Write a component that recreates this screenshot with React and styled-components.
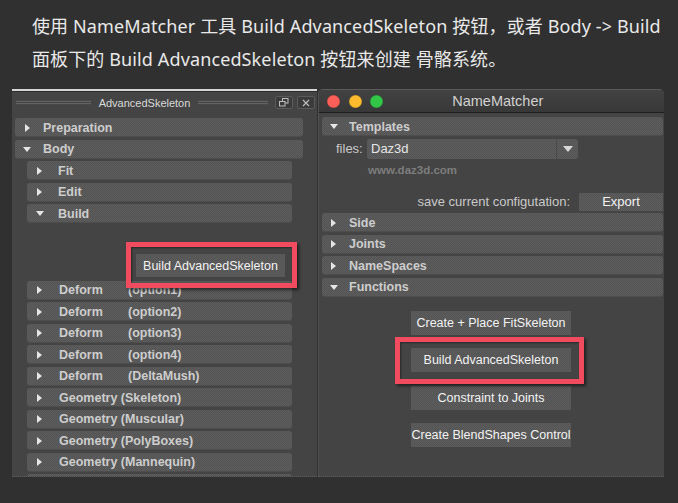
import React from "react";
import styled, { createGlobalStyle } from "styled-components";

const GlobalStyle = createGlobalStyle`
  html, body { margin: 0; padding: 0; background: #303030; }
  body {
    width: 678px;
    height: 503px;
    overflow: hidden;
    font-family: "Liberation Sans", Arial, sans-serif;
  }
`;

const checker = `repeating-conic-gradient(#5d5d5d 0 25%, #545454 0 50%) 0 0 / 2px 2px`;

const Page = styled.div`
  width: 678px;
  height: 503px;
  background: #303030;
  display: flex;
  flex-direction: column;
`;

const Intro = styled.p`
  margin: 0;
  height: 89px;
  flex: none;
  box-sizing: border-box;
  padding: 10px 0 0 32px;
  font-family: "Noto Sans", "Noto Sans CJK SC", sans-serif;
  font-size: 18px;
  line-height: 33px;
  letter-spacing: 0.12px;
  color: #e9e9e9;
  white-space: nowrap;
`;

const Workspace = styled.div`
  display: flex;
  gap: 1px;
  padding-left: 12px;
  height: 388px;
  flex: none;
`;

/* ---------- left: AdvancedSkeleton ---------- */

const LeftPanel = styled.div`
  width: 305px;
  background: #444;
  border-top: 2px solid #d6d6d6;
  overflow: hidden;
  border-bottom: 1px dotted #5e5e5e;
  box-sizing: border-box;
`;

const DockBar = styled.div`
  height: 21px;
  display: flex;
  align-items: center;
  gap: 6px;
  padding: 0 2px 0 4px;
  border-top: 1px solid #2c2c2c;
`;

const Grip = styled.div`
  width: ${(p) => p.$w}px;
  height: 5px;
  background-image: radial-gradient(circle, #727272 0.6px, transparent 0.8px);
  background-size: 2px 2.5px;
`;

const DockTitle = styled.span`
  font-size: 11px;
  color: #dadada;
  margin: 0 2px;
`;

const DockButtons = styled.div`
  display: flex;
  gap: 4px;
  margin-left: 1px;
`;

const DockButton = styled.div`
  width: 18px;
  height: 13px;
  box-sizing: border-box;
  border: 1px solid #5a5a5a;
  border-radius: 2px;
  background: #3b3b3b;
  display: flex;
  align-items: center;
  justify-content: center;
`;

const LeftList = styled.div`
  padding: 5px 14px 0 3px;
`;

const SubList = styled.div`
  padding: 0 11px 0 12px;
`;

const Bar = styled.div`
  height: 19px;
  margin-bottom: 2.5px;
  border-radius: 3px;
  background: ${checker};
  display: flex;
  align-items: center;
  padding-left: ${(p) => p.$arrowX}px;
  font-weight: bold;
  font-size: 12.5px;
  color: #cdcdcd;
  white-space: nowrap;
  box-shadow: inset 0 -1px 0 rgba(0, 0, 0, 0.12);
`;

const ArrowBox = styled.span`
  width: ${(p) => p.$w}px;
  flex: none;
  display: flex;
  align-items: center;
  &::before {
    content: "";
    display: block;
    ${(p) =>
      p.$open
        ? `border-top: 5px solid #e6e6e6; border-left: 4.5px solid transparent; border-right: 4.5px solid transparent; margin-left: -1px;`
        : `border-left: 5px solid #e6e6e6; border-top: 4px solid transparent; border-bottom: 4px solid transparent;`}
  }
`;

const Tab = styled.span`
  display: inline-block;
  width: ${(p) => p.$w}px;
`;

const Row = ({ label, note, open, arrowX = 10, textX = 28 }) => (
  <Bar $arrowX={arrowX}>
    <ArrowBox $w={textX - arrowX} $open={open} />
    {note ? <Tab $w={69}>{label}</Tab> : label}
    {note}
  </Bar>
);

const BuildArea = styled.div`
  display: flex;
  justify-content: flex-end;
  padding: 28.5px 7px 1px 0;
  margin-bottom: 2.5px;
`;

const Highlight = styled.div`
  position: relative;
  &::before {
    content: "";
    position: absolute;
    top: -${(p) => p.$t}px;
    left: -${(p) => p.$l}px;
    right: -${(p) => p.$r}px;
    bottom: -${(p) => p.$b}px;
    border: 5px solid #f04b5f;
    box-shadow: 2px 2px 3px rgba(0, 0, 0, 0.55), inset 1px 1px 2px rgba(0, 0, 0, 0.4);
    pointer-events: none;
    z-index: 2;
  }
`;

const ToolButton = styled.div`
  width: ${(p) => p.$w}px;
  height: ${(p) => p.$h}px;
  background: ${checker};
  color: #f3f3f3;
  font-size: ${(p) => p.$size || 12.5}px;
  display: flex;
  align-items: center;
  justify-content: center;
  white-space: nowrap;
`;

/* ---------- right: NameMatcher ---------- */

const Window = styled.div`
  width: 346px;
  background: #444;
  border-left: 1px dotted #5e5e5e;
  border-bottom: 1px dotted #5e5e5e;
  border-radius: 5px 5px 0 0;
  box-sizing: border-box;
  overflow: hidden;
`;

const TitleBar = styled.div`
  height: 24px;
  display: flex;
  align-items: center;
  padding-left: 8px;
  gap: 8.5px;
  background: linear-gradient(#424242, #383838);
  border-top: 1px solid #5a5a5a;
  border-bottom: 1px solid #1f1f1f;
  box-sizing: border-box;
`;

const Light = styled.span`
  width: 13px;
  height: 13px;
  border-radius: 50%;
  background: ${(p) => p.$c};
  box-shadow: inset 0 0 0 0.5px rgba(0, 0, 0, 0.25);
`;

const WindowTitle = styled.span`
  flex: 1;
  text-align: center;
  font-size: 14.5px;
  color: #d2d2d2;
  margin-right: 64px;
  margin-left: 4px;
`;

const RightList = styled.div`
  padding: 4px 1px 0 3px;
`;

const FilesRow = styled.div`
  display: flex;
  align-items: center;
  height: 20px;
  margin-top: 1.5px;
  padding-left: 14px;
  font-size: 13px;
  color: #c9c9c9;
`;

const FieldLabel = styled.span`
  width: 31px;
`;

const Select = styled.div`
  width: 211px;
  height: 20px;
  border-radius: 3px;
  background: ${checker};
  display: flex;
  align-items: center;
`;

const SelectValue = styled.span`
  flex: 1;
  padding-left: 4px;
  color: #e6e6e6;
  font-size: 13px;
`;

const SelectArrow = styled.span`
  width: 21px;
  height: 100%;
  border-left: 1px solid #4a4a4a;
  display: flex;
  align-items: center;
  justify-content: center;
  &::before {
    content: "";
    border-top: 6px solid #d8d8d8;
    border-left: 5.5px solid transparent;
    border-right: 5.5px solid transparent;
  }
`;

const Link = styled.div`
  height: 14px;
  line-height: 14px;
  margin-top: 4px;
  padding-left: 46px;
  font-size: 11.5px;
  font-weight: bold;
  color: #7d7d7d;
`;

const SaveRow = styled.div`
  display: flex;
  justify-content: flex-end;
  align-items: center;
  gap: 9px;
  margin-top: 16px;
  margin-bottom: 2.5px;
  height: 18px;
  font-size: 13px;
  color: #c9c9c9;
`;

const Functions = styled.div`
  display: flex;
  flex-direction: column;
  align-items: center;
  gap: 13.5px;
  padding: 11.5px 3px 0 0;
`;

const RestoreIcon = () => (
  <svg width="10" height="9" viewBox="0 0 10 9">
    <rect x="3.5" y="0.5" width="5.5" height="4.5" fill="none" stroke="#bdbdbd" />
    <rect x="0.5" y="3.5" width="5.5" height="4.5" fill="#3b3b3b" stroke="#bdbdbd" />
  </svg>
);

const CloseIcon = () => (
  <svg width="8" height="8" viewBox="0 0 8 8">
    <path d="M1 1 L7 7 M7 1 L1 7" stroke="#bdbdbd" strokeWidth="1.2" />
  </svg>
);

const deformRows = ["(option1)", "(option2)", "(option3)", "(option4)", "(DeltaMush)"];
const geometryRows = ["Skeleton", "Muscular", "PolyBoxes", "Mannequin"];

export default function App() {
  return (
    <Page>
      <GlobalStyle />
      <Intro>
        使用 NameMatcher 工具 Build AdvancedSkeleton 按钮，或者 Body -&gt; Build
        <br />
        面板下的 Build AdvancedSkeleton 按钮来创建 骨骼系统。
      </Intro>

      <Workspace>
        <LeftPanel>
          <DockBar>
            <Grip $w={75} />
            <DockTitle>AdvancedSkeleton</DockTitle>
            <Grip $w={70} />
            <DockButtons>
              <DockButton><RestoreIcon /></DockButton>
              <DockButton><CloseIcon /></DockButton>
            </DockButtons>
          </DockBar>

          <LeftList>
            <Row label="Preparation" />
            <Row label="Body" open arrowX={9} />
            <SubList>
              <Row label="Fit" textX={31} />
              <Row label="Edit" textX={31} />
              <Row label="Build" open textX={31} />
              <BuildArea>
                <Highlight $t={12} $l={10} $r={12} $b={11}>
                  <ToolButton $w={149} $h={23}>Build AdvancedSkeleton</ToolButton>
                </Highlight>
              </BuildArea>
              {deformRows.map((n) => (
                <Row key={n} label="Deform" note={n} textX={32} />
              ))}
              {geometryRows.map((n) => (
                <Row key={n} label={`Geometry (${n})`} textX={32} />
              ))}
              <Row label="" textX={32} />
            </SubList>
          </LeftList>
        </LeftPanel>

        <Window>
          <TitleBar>
            <Light $c="#fc5f57" />
            <Light $c="#fdbc2e" />
            <Light $c="#33c748" />
            <WindowTitle>NameMatcher</WindowTitle>
          </TitleBar>

          <RightList>
            <Row label="Templates" open arrowX={9} textX={27} />
            <FilesRow>
              <FieldLabel>files:</FieldLabel>
              <Select>
                <SelectValue>Daz3d</SelectValue>
                <SelectArrow />
              </Select>
            </FilesRow>
            <Link>www.daz3d.com</Link>
            <SaveRow>
              save current configutation:
              <ToolButton $w={84} $h={18} $size={13}>Export</ToolButton>
            </SaveRow>
            <Row label="Side" arrowX={9} textX={27} />
            <Row label="Joints" arrowX={9} textX={27} />
            <Row label="NameSpaces" arrowX={9} textX={27} />
            <Row label="Functions" open arrowX={9} textX={27} />
            <Functions>
              <ToolButton $w={160} $h={24}>Create + Place FitSkeleton</ToolButton>
              <Highlight $t={11} $l={16} $r={13} $b={12}>
                <ToolButton $w={160} $h={24}>Build AdvancedSkeleton</ToolButton>
              </Highlight>
              <ToolButton $w={160} $h={24}>Constraint to Joints</ToolButton>
              <ToolButton $w={160} $h={24}>Create BlendShapes Control</ToolButton>
            </Functions>
          </RightList>
        </Window>
      </Workspace>
    </Page>
  );
}
